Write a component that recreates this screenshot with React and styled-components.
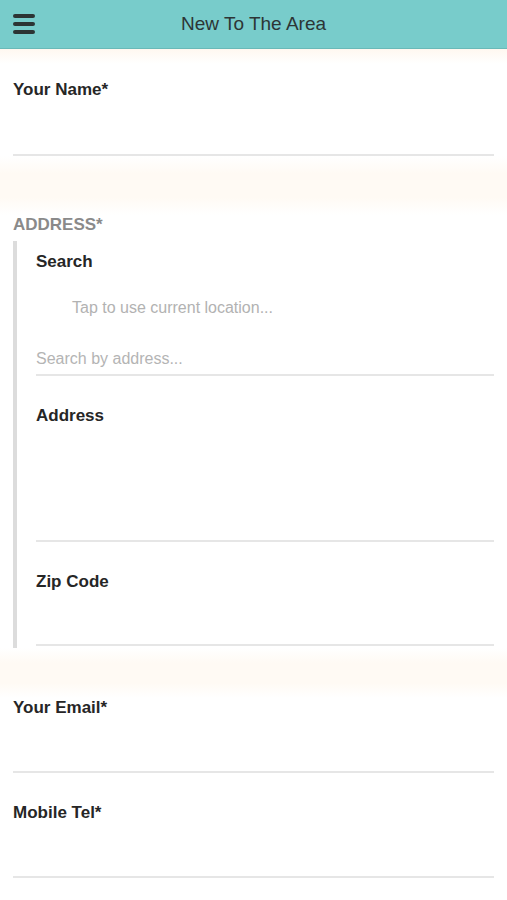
import React, { useState } from 'react';
import styled, { createGlobalStyle } from 'styled-components';

const GlobalStyle = createGlobalStyle`
  * { box-sizing: border-box; }
  body {
    margin: 0;
    background: #fff;
    font-family: "Liberation Sans", Arial, sans-serif;
  }
`;

const Page = styled.div`
  width: 100%;
  min-height: 100vh;
  background: #fff;
`;

const Header = styled.header`
  height: 49px;
  background-color: #78cccb;
  border-bottom: 1px solid #6ab9b8;
  display: flex;
  align-items: center;
  justify-content: center;
  position: relative;
`;

const MenuButton = styled.button`
  position: absolute;
  left: 13px;
  top: 14px;
  width: 23px;
  height: 20px;
  padding: 0;
  border: none;
  background: none;
  display: flex;
  flex-direction: column;
  justify-content: space-between;
  cursor: pointer;

  span {
    display: block;
    height: 4px;
    width: 22px;
    border-radius: 2px;
    background: #2c3434;
  }
`;

const Title = styled.h1`
  margin: 0;
  font-size: 19px;
  font-weight: 400;
  color: #2d3535;
`;

const Band = styled.div`
  height: ${(p) => p.h}px;
  background: ${(p) =>
    p.top
      ? 'linear-gradient(#fff8f0, #ffffff)'
      : 'linear-gradient(#ffffff, #fffaf4 30%, #fffaf4 70%, #ffffff)'};
`;

const Field = styled.div`
  display: flex;
  flex-direction: column;
  padding: ${(p) => p.pad || '0'};
`;

const Label = styled.label`
  font-size: 17px;
  line-height: 20px;
  font-weight: 700;
  color: ${(p) => (p.muted ? '#8a8a8a' : '#262626')};
  text-transform: ${(p) => (p.caps ? 'uppercase' : 'none')};
`;

const Input = styled.input`
  height: ${(p) => p.h || 55}px;
  border: none;
  border-bottom: 2px solid #e6e6e6;
  outline: none;
  font-family: "Liberation Sans", Arial, sans-serif;
  font-size: 16px;
  color: #333;
  padding: 0;
  background: transparent;
  margin-top: ${(p) => p.mt || 0}px;

  &::placeholder {
    color: #b4b4b4;
    font-weight: 300;
  }
`;

const Area = styled.textarea`
  height: 116px;
  border: none;
  border-bottom: 2px solid #e6e6e6;
  outline: none;
  resize: none;
  padding: 0;
  font-family: "Liberation Sans", Arial, sans-serif;
  font-size: 16px;
`;

const Section = styled.div`
  padding: 0 13px;
`;

const AddressBlock = styled.div`
  margin-top: 6px;
  border-left: 4px solid #dcdcdc;
  padding: 11px 0 2px 19px;
  display: flex;
  flex-direction: column;
`;

const LocateLink = styled.button`
  align-self: flex-start;
  margin: 26px 0 0 36px;
  padding: 0;
  border: none;
  background: none;
  font-family: "Liberation Sans", Arial, sans-serif;
  font-size: 16px;
  line-height: 20px;
  color: #b2b2b2;
  cursor: pointer;
`;

const Gap = styled.div`
  height: ${(p) => p.h}px;
`;

export default function App() {
  const [form, setForm] = useState({ name: '', search: '', address: '', zip: '', email: '', tel: '' });
  const set = (k) => (e) => setForm({ ...form, [k]: e.target.value });

  return (
    <Page>
      <GlobalStyle />
      <Header>
        <MenuButton aria-label="menu">
          <span />
          <span />
          <span />
        </MenuButton>
        <Title>New To The Area</Title>
      </Header>
      <Band top h={15} />

      <Section>
        <Field pad="16px 0 0">
          <Label>Your Name*</Label>
          <Input h={56} value={form.name} onChange={set('name')} />
        </Field>
      </Section>

      <Band h={59} />

      <Section>
        <Label muted caps>Address*</Label>
        <AddressBlock>
          <Label>Search</Label>
          <LocateLink>Tap to use current location...</LocateLink>
          <Input h={33} mt={25} placeholder="Search by address..." value={form.search} onChange={set('search')} />
          <Gap h={30} />
          <Label>Address</Label>
          <Area value={form.address} onChange={set('address')} />
          <Gap h={30} />
          <Label>Zip Code</Label>
          <Input h={54} value={form.zip} onChange={set('zip')} />
        </AddressBlock>
      </Section>

      <Band h={50} />

      <Section>
        <Field>
          <Label>Your Email*</Label>
          <Input type="email" value={form.email} onChange={set('email')} />
        </Field>
        <Field pad="30px 0 0">
          <Label>Mobile Tel*</Label>
          <Input type="tel" value={form.tel} onChange={set('tel')} />
        </Field>
      </Section>
    </Page>
  );
}
